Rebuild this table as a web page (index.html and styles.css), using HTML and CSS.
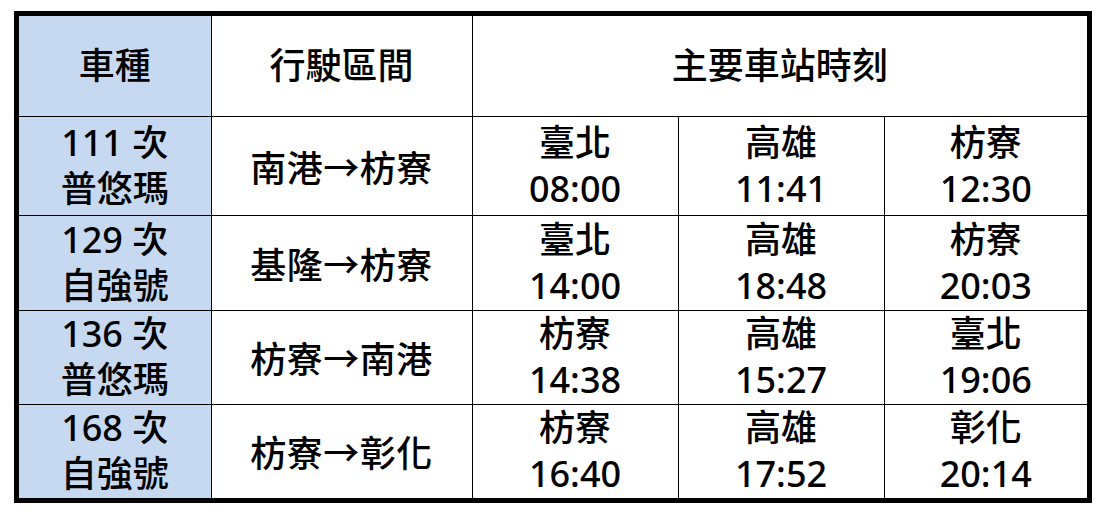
FILE: index.html
```html
<!DOCTYPE html>
<html lang="zh-Hant">
<head>
<meta charset="utf-8">
<title>列車時刻表</title>
<link rel="stylesheet" href="styles.css">
</head>
<body>
<div class="frame">
  <table class="timetable">
    <colgroup>
      <col class="c-type">
      <col class="c-route">
      <col class="c-st1">
      <col class="c-st2">
      <col class="c-st3">
    </colgroup>
    <tr class="r-head">
      <th class="type">車種</th>
      <th>行駛區間</th>
      <th colspan="3">主要車站時刻</th>
    </tr>
    <tr class="r1">
      <td class="type">111 次<br>普悠瑪</td>
      <td class="route">南港→枋寮</td>
      <td>臺北<br>08:00</td>
      <td>高雄<br>11:41</td>
      <td>枋寮<br>12:30</td>
    </tr>
    <tr class="r2">
      <td class="type">129 次<br>自強號</td>
      <td class="route">基隆→枋寮</td>
      <td>臺北<br>14:00</td>
      <td>高雄<br>18:48</td>
      <td>枋寮<br>20:03</td>
    </tr>
    <tr class="r3">
      <td class="type">136 次<br>普悠瑪</td>
      <td class="route">枋寮→南港</td>
      <td>枋寮<br>14:38</td>
      <td>高雄<br>15:27</td>
      <td>臺北<br>19:06</td>
    </tr>
    <tr class="r4">
      <td class="type">168 次<br>自強號</td>
      <td class="route">枋寮→彰化</td>
      <td>枋寮<br>16:40</td>
      <td>高雄<br>17:52</td>
      <td>彰化<br>20:14</td>
    </tr>
  </table>
</div>
</body>
</html>
```

FILE: styles.css
```css
html, body {
  margin: 0;
  padding: 0;
  background: #ffffff;
}

.frame {
  margin: 11px 0 0 14px;
  width: 1068px;
  border: 5px solid #000000;
}

.timetable {
  width: 1068px;
  table-layout: fixed;
  border-collapse: collapse;
  border-style: hidden;
  font-family: "Noto Sans", "Noto Sans CJK TC", sans-serif;
  font-size: 36px;
  line-height: 46px;
  font-weight: 500;
  color: #000000;
}

.c-type { width: 192px; }
.c-route { width: 261px; }
.c-st1 { width: 206px; }
.c-st2 { width: 206px; }
.c-st3 { width: 203px; }

.timetable th,
.timetable td {
  border: 1px solid #000000;
  padding: 0;
  text-align: center;
  vertical-align: middle;
  font-weight: 500;
}

.timetable .type {
  background: #c6d9f0;
}

.timetable .route {
  font-family: "Noto Sans CJK TC", sans-serif;
  letter-spacing: 0.5px;
}

.r-head { height: 100px; }
.r1 { height: 99px; }
.r2 { height: 95px; }
.r3 { height: 94px; }
.r4 { height: 94px; }
```
